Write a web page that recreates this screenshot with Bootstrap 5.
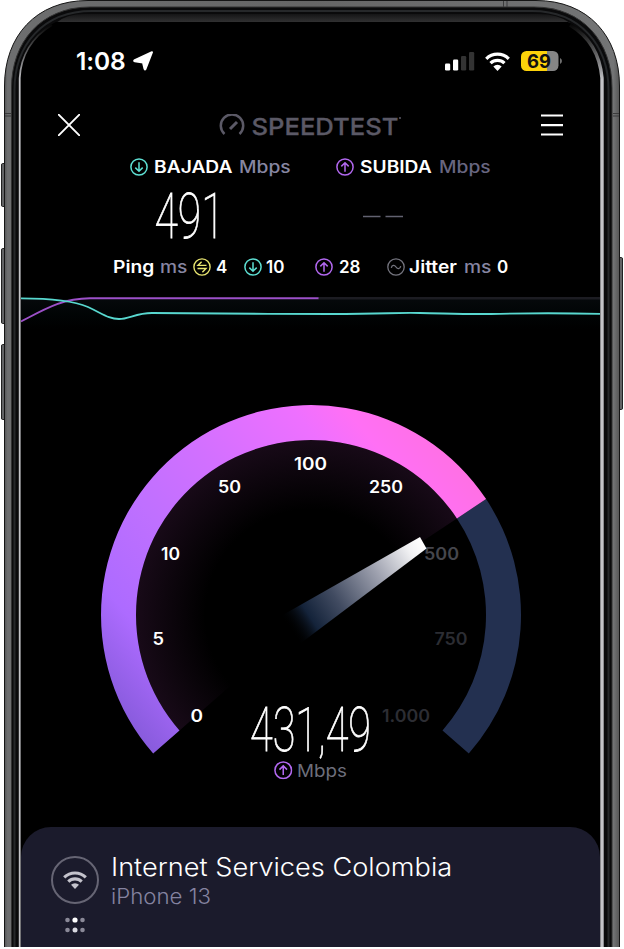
<!DOCTYPE html>
<html lang="es">
<head>
<meta charset="utf-8">
<meta name="viewport" content="width=device-width, initial-scale=1">
<title>Speedtest</title>
<link href="https://cdn.jsdelivr.net/npm/bootstrap@5.3.0/dist/css/bootstrap.min.css" rel="stylesheet">
<style>
  body { background:#fff; font-family:Inter,"Open Sans",sans-serif; color:#fff; }
  .device { width:624px; height:949px; }
  .device-frame { position:absolute; inset:0; }
  .screen { position:relative; margin-left:21px; width:579px; height:947px; padding-top:40px; }
  svg { display:block; flex:none; }
  .status-bar { height:42px; padding:0 37px 0 55px; }
  .clock { font-size:24.5px; font-weight:600; width:57px; letter-spacing:-.1px; line-height:1; }
  .title-bar { height:86px; padding:0 37px; }
  .brand { color:#5b5966; font-size:23.5px; font-weight:500; line-height:1; }
  .stat-row { display:grid; align-items:center; line-height:20px; white-space:nowrap; font-size:17px; font-weight:600; }
  .speed-head { grid-template-columns:24px 85px 97px 24px 79px 1fr; padding-left:109px; margin-top:-11px; }
  .ping-row { grid-template-columns:47px 33px 23px 28px 22px 49px 24px 48px 22px 55px 33px 1fr; padding-left:92px; height:20px; }
  .stat-row span, .isp-name, .isp-device { justify-self:start; transform-origin:0 50%; }
  .stat-row span { transform:scaleX(1.13); }
  .stat-row .num { transform:none; }
  .unit { color:#8786a2; font-weight:500; }
  .unit-dim { color:#686680; font-weight:500; }
  .values { height:80px; }
  .thin { font-family:Roboto,sans-serif; font-weight:100; fill:#fff; stroke:#fff; stroke-width:.8; }
  .gauge-num { font-size:17px; font-weight:600; fill:#fff; }
  .gauge-off { fill:#2c2d33; }
  .gauge-next { fill:#45464d; }
  .isp { background:#1b1b2c; border-radius:30px 30px 0 0; height:120px; padding:28px 30px 0; }
  .isp-text { margin-top:-3px; }
  .isp-name { font-size:25px; font-weight:300; line-height:30px; white-space:nowrap; transform:scaleX(1.087); }
  .isp-device { font-size:21px; font-weight:300; line-height:30px; color:#8583a0; white-space:nowrap; transform:scaleX(1.06); }
</style>
</head>
<body>
<svg width="0" height="0" class="position-absolute">
  <defs>
    <symbol id="down" viewBox="0 0 18 18"><g fill="none" stroke="currentColor" stroke-width="1.5"><circle cx="9" cy="9" r="8.1"/><path d="M9 4.3v9M5.3 9.6 9 13.2l3.7-3.6"/></g></symbol>
    <symbol id="up" viewBox="0 0 18 18"><g fill="none" stroke="currentColor" stroke-width="1.5"><circle cx="9" cy="9" r="8.1"/><path d="M9 13.7v-9M5.3 8.4 9 4.8l3.7 3.6"/></g></symbol>
    <symbol id="idle" viewBox="0 0 18 18"><g fill="none" stroke="currentColor" stroke-width="1.4"><circle cx="9" cy="9" r="8.1"/><path d="M8.6 3.8 5 7.4h8.5M4.5 10.5H13l-3.6 3.7"/></g></symbol>
    <symbol id="wave" viewBox="0 0 18 18"><g fill="none" stroke="currentColor" stroke-width="1.3"><circle cx="9" cy="9" r="8.2"/><path d="M4.3 9.8C5 6.7 7.5 6.8 9 9s4 2.5 4.7-.8"/></g></symbol>
    <symbol id="wifi" viewBox="0 0 24 18"><g fill="none" stroke="currentColor" stroke-width="3.1"><path d="M1.2 6.4A15.5 15.5 0 0 1 22.8 6.4"/><path d="M5.3 10.6A9.6 9.6 0 0 1 18.7 10.6"/></g><path fill="currentColor" d="M8 13.800a5.800 5.800 0 0 1 8 0L12 18z"/></symbol>
  </defs>
</svg>
<main class="device position-relative overflow-hidden">
  <svg class="device-frame" width="624" height="947" aria-hidden="true">
    <defs>
      <linearGradient id="side" x1="0" x2="1"><stop offset="0" stop-color="#555657"/><stop offset=".005" stop-color="#6d6e6f"/><stop offset=".5" stop-color="#666"/><stop offset=".99" stop-color="#737475"/><stop offset="1" stop-color="#555"/></linearGradient>
      <linearGradient id="lip" x1="0" y1="0" x2="0" y2="1"><stop offset="0" stop-color="#151516"/><stop offset="1" stop-color="#343435"/></linearGradient>
      <linearGradient id="rim" gradientUnits="userSpaceOnUse" x1="0" y1="22" x2="0" y2="80"><stop offset="0" stop-color="#999" stop-opacity="0"/><stop offset="1" stop-color="#c4c4c8"/></linearGradient>
    </defs>
    <g fill="#626365" stroke="#222">
      <path d="M6 163.500H2.500Q1.500 163.500 1.500 165V205q0 1.500 1 1.500H6M6 248.500H2.500q-1 0-1 1.500V322q0 1.500 1 1.500H6M6 344.500H2.500q-1 0-1 1.500V418q0 1.500 1 1.500H6M618 257.500h3.500q1 0 1 1.500V408q0 1.500-1 1.500H618"/>
    </g>
    <path d="M4.500 950V86C4.500 36 36 .5 88 .5H536C588 .5 619.500 36 619.500 86V950" fill="url(#side)" stroke="#151515"/>
    <path d="M11.500 950V88C11.500 42 41 7 90 7H534C583 7 612 42 612 88V950" fill="#0a0a0b" stroke="#333"/>
    <path d="M14.500 950V90C14.500 45 43 11 92 11H532C580 11 608.500 45 608.500 90V950" fill="none" stroke="#26282a" stroke-width="2"/>
    <path d="M56 23Q66 14 85 14H538Q558 14 570 23Z" fill="url(#lip)"/>
    <path d="M20 950V86C20 55 32 34 56 22H568C591 34 602 55 602 86V950Z" fill="#000"/>
    <path d="M19.700 950V78C21 56 32 37 52 25" fill="none" stroke="url(#rim)" stroke-width="1.800"/>
    <path d="M602 950V78C600 56 590 37 570 25" fill="none" stroke="url(#rim)" stroke-width="3.400"/>
    <path d="M5 113.500h6M5 116h6M613 113.500h6M613 116h6M503.500 1v6M507 1v6" stroke="#3b3b3c"/>
  </svg>

  <div class="screen d-flex flex-column">
    <div class="status-bar d-flex align-items-center">
      <span class="clock">1:08</span>
      <svg width="21" height="20" viewBox="0 0 21 20"><path d="M19 1.200 12.500 18q-.6 1-1-.2L10 11.500 1.800 10.200q-1.300-.3 0-1.100z" fill="#fff" stroke="#fff" stroke-width="2" stroke-linejoin="round"/></svg>
      <svg class="ms-auto" width="30" height="19" viewBox="0 0 30 19"><rect y="11.500" width="5.200" height="7" rx="1.200" fill="#fff"/><rect x="8" y="7.500" width="5.200" height="11" rx="1.200" fill="#fff"/><rect x="16" y="4" width="5.200" height="14.500" rx="1.200" fill="#333"/><rect x="24" y="0" width="5.200" height="18.500" rx="1.200" fill="#333"/></svg>
      <svg class="ms-2 me-2" width="30" height="19"><use href="#wifi" x="2" y="0" width="25" height="19"/></svg>
      <svg width="42" height="20" viewBox="0 0 42 20"><defs><clipPath id="cell"><rect width="37.500" height="20" rx="5.500"/></clipPath></defs><g clip-path="url(#cell)"><path fill="#fdd20a" d="M0 0h26v20H0z"/><path fill="#858585" d="M26 0h12v20H26z"/></g><path d="M39 7q2 1 2 3t-2 3z" fill="#707070"/><text x="6" y="16.600" font-size="18.500" font-weight="700" textLength="24" lengthAdjust="spacingAndGlyphs" fill="#111">69</text></svg>
    </div>

    <header class="title-bar d-flex align-items-center justify-content-between">
      <svg width="22" height="22" viewBox="0 0 22 22"><path d="m0 0 22 22M22 0 0 22" stroke="#fff" stroke-width="1.900"/></svg>
      <div class="brand d-flex align-items-center">
        <svg width="26" height="22" viewBox="0 0 26 22" fill="none" stroke="currentColor" stroke-width="2.500"><path d="M5.500 20A11.200 11.200 0 1 1 20.500 20"/><path d="m11 15 7-7" stroke-width="3"/></svg>
        <svg width="157" height="34"><text x="6.500" y="26.800" fill="currentColor" stroke="currentColor" stroke-width=".3" textLength="147" lengthAdjust="spacingAndGlyphs">SPEEDTEST</text><circle cx="155" cy="10" r="1" fill="currentColor"/></svg>
      </div>
      <svg width="22" height="22" viewBox="0 0 22 22"><path d="M0 1.500h22M0 11.200h22M0 20.500h22" stroke="#fff" stroke-width="2.200"/></svg>
    </header>

    <div class="stat-row speed-head">
      <svg width="18" height="18" color="#5ee0d4"><use href="#down"/></svg><span>BAJADA</span><span class="unit">Mbps</span>
      <svg width="18" height="18" color="#b268f0"><use href="#up"/></svg><span>SUBIDA</span><span class="unit-dim">Mbps</span>
    </div>
    <div class="values">
      <svg width="579" height="80"><text class="thin" x="133.500" y="60.500" font-size="62.500" textLength="70" lengthAdjust="spacingAndGlyphs">491</text><path d="M342 39.500h17.500M364.500 39.500H382" stroke="#626270" stroke-width="1.600"/></svg>
    </div>
    <div class="stat-row ping-row">
      <span>Ping</span><span class="unit">ms</span><svg width="18" height="18" color="#e8e570"><use href="#idle"/></svg><span class="num">4</span>
      <svg width="18" height="18" color="#5ee0d4"><use href="#down"/></svg><span class="num">10</span>
      <svg width="18" height="18" color="#b268f0"><use href="#up"/></svg><span class="num">28</span>
      <svg width="18" height="18" color="#74747e"><use href="#wave"/></svg><span>Jitter</span><span class="unit">ms</span><span class="num">0</span>
    </div>

    <svg width="579" height="60" viewBox="21 277 579 60">
      <defs>
        <linearGradient id="glow" x1="0" y1="0" x2="0" y2="1"><stop offset="0" stop-color="#0b1216"/><stop offset=".5" stop-color="#02090a"/><stop offset="1" stop-color="#000"/></linearGradient>
      </defs>
      <path d="M21 299h579v30H21z" fill="url(#glow)" opacity=".5"/>
      <path d="M318 298.300h282" stroke="#1c1c22" stroke-width="2.400"/>
      <path d="M21 321.500C45 309 62 298.500 90 298.300H318.500" fill="none" stroke="#9c50c8" stroke-width="1.900"/>
      <path d="M21 298.300C50 298.300 72 300 88 307 103 314 109 319 119 319S136 313 152 313C220 313.500 270 314 330 314S390 312.500 420 313 470 314.500 500 313.800 560 313 600 313.800" fill="none" stroke="#58d8cf" stroke-width="1.800"/>
    </svg>

    <svg width="579" height="490" viewBox="21 337 579 490">
      <defs>
        <linearGradient id="arc" gradientUnits="userSpaceOnUse" x1="130" y1="740" x2="480" y2="450"><stop offset="0" stop-color="#8359d8"/><stop offset=".17" stop-color="#ad6bff"/><stop offset=".35" stop-color="#bf70ff"/><stop offset=".52" stop-color="#d170ff"/><stop offset=".74" stop-color="#ee70ff"/><stop offset=".83" stop-color="#ff70f5"/><stop offset="1" stop-color="#ff70dc"/></linearGradient>
        <radialGradient id="inner" gradientUnits="userSpaceOnUse" cx="311" cy="615" r="176"><stop offset=".6" stop-color="#180a18" stop-opacity="0"/><stop offset="1" stop-color="#180a18"/></radialGradient>
        <linearGradient id="needle" gradientUnits="userSpaceOnUse" x1="423" y1="543" x2="290" y2="630"><stop offset="0" stop-color="#fff"/><stop offset=".1" stop-color="#f1f1f3"/><stop offset=".35" stop-color="#9da0ae"/><stop offset=".65" stop-color="#414b61"/><stop offset=".85" stop-color="#14233a"/><stop offset="1" stop-color="#000" stop-opacity="0"/></linearGradient>
      </defs>
      <path d="M311 615 179.500 730.500A175 175 0 1 1 456.900 518.400Z" fill="url(#inner)"/>
      <path d="M456.900 518.400 486.100 499.100A210 210 0 0 1 468.800 753.600L442.500 730.500A175 175 0 0 0 456.900 518.400Z" fill="#233050"/>
      <path d="M179.500 730.500 153.200 753.600A210 210 0 1 1 486.100 499.100L456.900 518.400A175 175 0 1 0 179.500 730.500Z" fill="url(#arc)"/>
      <g class="gauge-num">
        <text x="294" y="470" textLength="33" lengthAdjust="spacingAndGlyphs">100</text>
        <text x="218" y="493" textLength="23" lengthAdjust="spacingAndGlyphs">50</text>
        <text x="369" y="493" textLength="34" lengthAdjust="spacingAndGlyphs">250</text>
        <text x="161" y="560" textLength="19" lengthAdjust="spacingAndGlyphs">10</text>
        <text x="152.500" y="644.500" textLength="11.500" lengthAdjust="spacingAndGlyphs">5</text>
        <text x="190.500" y="722" textLength="12.500" lengthAdjust="spacingAndGlyphs">0</text>
        <text class="gauge-next" x="424" y="560" textLength="35" lengthAdjust="spacingAndGlyphs">500</text>
        <text class="gauge-off" x="434.500" y="644.500" textLength="33" lengthAdjust="spacingAndGlyphs">750</text>
        <text class="gauge-off" x="382" y="722" textLength="48" lengthAdjust="spacingAndGlyphs">1.000</text>
      </g>
      <path d="M420 537 426.500 548.500 301 643 281 616Z" fill="url(#needle)"/>
      <text class="thin" x="250" y="750.500" font-size="61" textLength="121" lengthAdjust="spacingAndGlyphs">431,49</text>
      <use href="#up" x="274" y="761" width="18.500" height="18.500" color="#b268f0"/>
      <text x="297" y="776.500" font-size="17.500" font-weight="400" fill="#6d6f7c" textLength="50" lengthAdjust="spacingAndGlyphs">Mbps</text>
    </svg>

    <footer class="isp d-flex">
      <div>
        <svg width="48" height="50" viewBox="0 0 48 50"><circle cx="24" cy="25" r="23" fill="none" stroke="#666574" stroke-width="2"/><use href="#wifi" x="12" y="16" width="24" height="18" color="#c4c3cc"/></svg>
        <svg width="48" height="36" viewBox="0 0 48 36" fill="#8a8998"><circle cx="16.500" cy="15" r="2.300"/><circle cx="31.500" cy="15" r="2.300"/><circle cx="16.500" cy="25" r="2.300"/><circle cx="31.500" cy="25" r="2.300"/><circle cx="24" cy="15" r="2.600" fill="#fff"/><circle cx="24" cy="25" r="2.500" fill="#d8d8e0"/></svg>
      </div>
      <div class="isp-text ps-2 ms-1">
        <div class="isp-name">Internet Services Colombia</div>
        <div class="isp-device">iPhone 13</div>
      </div>
    </footer>
  </div>
</main>
<script src="https://cdn.jsdelivr.net/npm/bootstrap@5.3.0/dist/js/bootstrap.bundle.min.js"></script>
</body>
</html>
